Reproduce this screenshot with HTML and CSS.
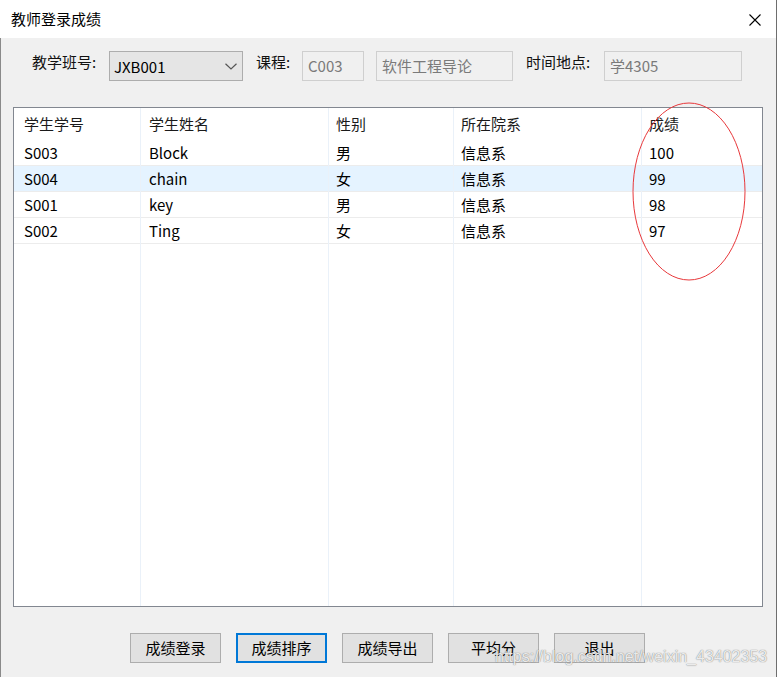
FILE: index.html
```html
<!DOCTYPE html>
<html lang="zh-CN">
<head>
<meta charset="utf-8">
<title>教师登录成绩</title>
<link rel="stylesheet" href="styles.css">
</head>
<body>
<div class="window">
  <div class="titlebar">
    <span class="title">教师登录成绩</span>
    <svg class="close" width="12" height="12" viewBox="0 0 12 12"><path d="M0.5 0.5 L11.5 11.5 M11.5 0.5 L0.5 11.5" stroke="#000" stroke-width="1.1" fill="none"/></svg>
  </div>
  <div class="client">
    <div class="toolbar">
      <span class="label lbl-class">教学班号:</span>
      <div class="combo">
        <span>JXB001</span>
        <svg class="chev" width="12" height="7" viewBox="0 0 12 7"><path d="M0.5 0.8 L6 6 L11.5 0.8" stroke="#555" stroke-width="1.2" fill="none"/></svg>
      </div>
      <span class="label lbl-course">课程:</span>
      <div class="field f-code">C003</div>
      <div class="field f-name">软件工程导论</div>
      <span class="label lbl-place">时间地点:</span>
      <div class="field f-place">学4305</div>
    </div>
    <div class="list">
      <div class="col c1">
        <div class="hd">学生学号</div>
        <div class="cell">S003</div>
        <div class="cell sel">S004</div>
        <div class="cell">S001</div>
        <div class="cell">S002</div>
      </div>
      <div class="col c2">
        <div class="hd">学生姓名</div>
        <div class="cell">Block</div>
        <div class="cell sel">chain</div>
        <div class="cell">key</div>
        <div class="cell">Ting</div>
      </div>
      <div class="col c3">
        <div class="hd">性别</div>
        <div class="cell">男</div>
        <div class="cell sel">女</div>
        <div class="cell">男</div>
        <div class="cell">女</div>
      </div>
      <div class="col c4">
        <div class="hd">所在院系</div>
        <div class="cell">信息系</div>
        <div class="cell sel">信息系</div>
        <div class="cell">信息系</div>
        <div class="cell">信息系</div>
      </div>
      <div class="col c5">
        <div class="hd">成绩</div>
        <div class="cell">100</div>
        <div class="cell sel">99</div>
        <div class="cell">98</div>
        <div class="cell">97</div>
      </div>
    </div>
    <div class="buttons">
      <button class="btn">成绩登录</button>
      <button class="btn default">成绩排序</button>
      <button class="btn">成绩导出</button>
      <button class="btn">平均分</button>
      <button class="btn">退出</button>
    </div>
  </div>
  <svg class="mark" width="115" height="180" viewBox="0 0 115 180"><ellipse cx="57" cy="89.5" rx="56" ry="88.5" stroke="#e8383b" stroke-width="1" fill="none"/></svg>
  <div class="watermark">https://blog.csdn.net/weixin_43402353</div>
</div>
</body>
</html>
```
FILE: styles.css
```css
* { box-sizing: border-box; }
html, body { margin: 0; padding: 0; background: #f0f0f0; }
body {
  font-family: "Noto Sans CJK SC", "Noto Sans", sans-serif;
  font-size: 15px;
  color: #000;
}
.window {
  position: relative;
  width: 777px;
  height: 677px;
  background: #f0f0f0;
  border-right: 1px solid #6e6e6e;
  display: flex;
  flex-direction: column;
  overflow: hidden;
}
.titlebar {
  height: 38px;
  flex: none;
  background: #fff;
  display: flex;
  align-items: center;
  justify-content: space-between;
  padding: 0 15px 0 11px;
}
.title { font-size: 15px; line-height: 20px; margin-top: 0; }
.close { display: block; margin-top: 1px; }
.client {
  flex: 1;
  border-left: 1px solid #8a8a8a;
  display: flex;
  flex-direction: column;
}
.toolbar {
  display: flex;
  align-items: flex-start;
  padding: 13px 0 0 31px;
  height: 43px;
  flex: none;
}
.label {
  font-size: 15px;
  line-height: 20px;
  padding-top: 1px;
  color: #111;
  flex: none;
}
.lbl-class { width: 77px; }
.lbl-course { width: 46px; margin-left: 13px; }
.lbl-place { width: 78px; margin-left: 13px; }
.combo {
  width: 134px;
  height: 30px;
  background: #e5e5e5;
  border: 1px solid #adadad;
  display: flex;
  align-items: center;
  justify-content: space-between;
  padding: 0 5px 0 4px;
  line-height: 20px;
  flex: none;
}
.combo span { padding-top: 1px; }
.chev { display: block; margin-top: 1px; }
.field {
  height: 30px;
  border: 1px solid #cfcfcf;
  background: #f0f0f0;
  color: #7a7a7a;
  line-height: 27px;
  padding-left: 5px;
  flex: none;
}
.f-code { width: 62px; }
.f-name { width: 137px; margin-left: 12px; }
.f-place { width: 138px; }
.list {
  margin: 26px 0 0 12px;
  width: 750px;
  height: 500px;
  flex: none;
  background: #fff;
  border: 1px solid #828790;
  display: flex;
}
.col {
  display: flex;
  flex-direction: column;
  border-right: 1px solid #eaf1f9;
  flex: none;
}
.c1 { width: 127px; }
.c2 { width: 188px; }
.c3 { width: 125px; }
.c4 { width: 188px; }
.c5 { flex: 1; border-right: none; }
.hd {
  height: 32px;
  line-height: 32px;
  padding-left: 7px;
  color: #1a1a1a;
}
.cell {
  height: 26px;
  line-height: 25px;
  padding-left: 7px;
  border-bottom: 1px solid #ececec;
}
.c1 .hd, .c1 .cell { padding-left: 10px; }
.c2 .hd, .c2 .cell { padding-left: 8px; }
.cell.sel { background: #e5f3ff; }
.buttons {
  display: flex;
  gap: 15px;
  padding: 26px 0 0 129px;
}
.btn {
  width: 91px;
  height: 30px;
  background: #e1e1e1;
  border: 1px solid #adadad;
  border-radius: 0;
  font-family: inherit;
  font-size: 15px;
  color: #000;
  padding: 0;
  line-height: 26px;
}
.btn.default { border: 2px solid #0078d7; }
.mark {
  position: absolute;
  left: 632px;
  top: 102px;
}
.watermark {
  position: absolute;
  left: 495px;
  top: 647px;
  font-family: "Liberation Sans", Arial, sans-serif;
  font-size: 16px;
  line-height: 20px;
  color: rgba(255,255,255,0.85);
  text-shadow: 0 0 1px rgba(90,90,90,0.6), 0 0 1px rgba(90,90,90,0.5);
  white-space: nowrap;
}
```
